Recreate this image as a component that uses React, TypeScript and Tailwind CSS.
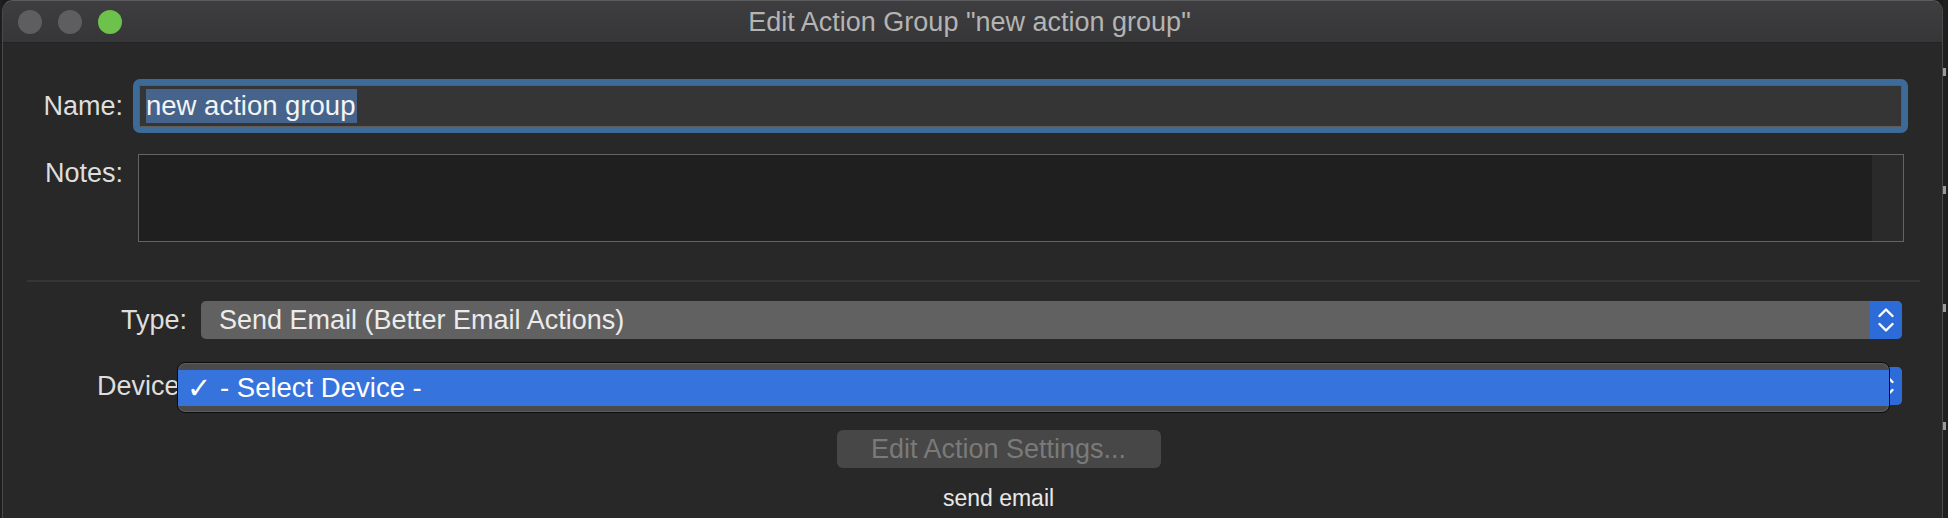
import React from "react";

const font = { fontFamily: '"Liberation Sans", "DejaVu Sans", Arial, sans-serif' };

function Chevrons({ className = "" }: { className?: string }) {
  return (
    <svg width="16" height="26" viewBox="0 0 16 26" className={className} fill="none">
      <path d="M1.5 9 L8 2.5 L14.5 9" stroke="white" strokeWidth="2.4" strokeLinecap="round" strokeLinejoin="round" />
      <path d="M1.5 17 L8 23.5 L14.5 17" stroke="white" strokeWidth="2.4" strokeLinecap="round" strokeLinejoin="round" />
    </svg>
  );
}

function Popup({ text }: { text: string }) {
  return (
    <div className="flex h-[38px] flex-1 overflow-hidden rounded-[5px] bg-[#616161]">
      <div className="flex flex-1 items-center pl-[18px] text-[27px] leading-[32px] text-[#ececec]">{text}</div>
      <div className="flex w-[32px] items-center justify-center bg-[#2d6bd9]">
        <Chevrons />
      </div>
    </div>
  );
}

export default function App() {
  return (
    <div className="flex h-[518px] w-[1948px] overflow-hidden bg-[#1b1b1b]" style={font}>
      <div className="w-[2px] bg-[#1e1e1e]" />
      <div className="flex w-[1941px] flex-col overflow-hidden rounded-t-[11px] border-x border-t border-x-[#4a4a4a] border-t-[#5c5c5e] bg-[#282828]">
        {/* Title bar */}
        <div className="grid h-[42px] grid-cols-[1fr_auto_1fr] items-center border-b border-[#232323] bg-gradient-to-b from-[#3e3e40] to-[#363638]">
          <div className="flex items-center gap-[16px] pl-[15px]">
            <div className="h-[24px] w-[24px] rounded-full bg-[#5e5e60]" />
            <div className="h-[24px] w-[24px] rounded-full bg-[#5e5e60]" />
            <div className="h-[24px] w-[24px] rounded-full bg-[#6cc24a]" />
          </div>
          <div className="pr-[6px] text-[27px] leading-[32px] text-[#b4b4b4]">Edit Action Group "new action group"</div>
          <div />
        </div>

        {/* Content */}
        <div className="flex flex-col pt-[36px]">
          {/* Name */}
          <div className="flex items-center">
            <div className="w-[120px] text-right text-[27px] leading-[32px] text-[#dedede]">Name:</div>
            <div className="ml-[10px] mr-[34px] flex-1 rounded-[7px] bg-[#3e6a97] p-[6px]">
              <div className="flex h-[42px] items-center border border-[#5c5c5c] bg-[#353535] pl-[6px]">
                <span className="h-[34px] bg-[#46648b] pr-[2px] text-[27.5px] leading-[34px] text-[#f4f4f4]">new action group</span>
              </div>
            </div>
          </div>

          {/* Notes */}
          <div className="mt-[21px] flex items-start">
            <div className="mt-[3px] w-[120px] text-right text-[27px] leading-[32px] text-[#dedede]">Notes:</div>
            <div className="ml-[15px] mr-[38px] flex h-[88px] flex-1 border border-[#646464] bg-[#1f1f1f]">
              <div className="flex-1" />
              <div className="w-[31px] bg-[#2a2a2a]" />
            </div>
          </div>

          {/* Separator */}
          <div className="ml-[24px] mr-[22px] mt-[38px] h-[2px] bg-[#363636]" />

          {/* Type */}
          <div className="mt-[19px] flex items-center pr-[40px]">
            <div className="w-[184px] text-right text-[27px] leading-[32px] text-[#dedede]">Type:</div>
            <div className="ml-[14px] flex flex-1">
              <Popup text="Send Email (Better Email Actions)" />
            </div>
          </div>

          {/* Device */}
          <div className="mt-[28px] flex items-center pr-[40px]">
            <div className="w-[184px] text-right text-[27px] leading-[32px] text-[#dedede]">Device:</div>
            <div className="relative ml-[14px] flex flex-1">
              <Popup text="" />
              <div className="absolute left-[-24px] top-[-5px] h-[51px] w-[1713px] overflow-hidden rounded-[8px] border border-[#0c0c0c] bg-[#4a4a4c] pt-[7px] shadow-[inset_0_0_0_1px_#5e5e60]">
                <div className="flex h-[36px] items-center bg-[#3673dc] pl-[9px] text-[27.5px] leading-[32px] text-white">
                  <span className="w-[33px]" style={{ fontFamily: '"DejaVu Sans", sans-serif', fontSize: "29px", lineHeight: "32px" }}>✓</span>
                  <span>- Select Device -</span>
                </div>
              </div>
            </div>
          </div>

          {/* Button */}
          <div className="mt-[25px] flex justify-center pl-[52px]">
            <div className="flex h-[38px] w-[324px] items-center justify-center rounded-[6px] bg-[#474747] text-[27px] leading-[32px] text-[#7a7a7a]">
              Edit Action Settings...
            </div>
          </div>

          {/* send email */}
          <div className="mt-[16px] flex justify-center pl-[52px] text-[23px] leading-[28px] text-[#e8e8e8]">send email</div>
        </div>
      </div>
      <div className="flex flex-1 flex-col gap-[110px] bg-[#1f1f1f] pt-[68px]">
        <div className="h-[8px] w-[3px] bg-[#9a9a9a]" />
        <div className="h-[8px] w-[3px] bg-[#9a9a9a]" />
        <div className="h-[8px] w-[3px] bg-[#9a9a9a]" />
        <div className="h-[8px] w-[3px] bg-[#9a9a9a]" />
      </div>
    </div>
  );
}
